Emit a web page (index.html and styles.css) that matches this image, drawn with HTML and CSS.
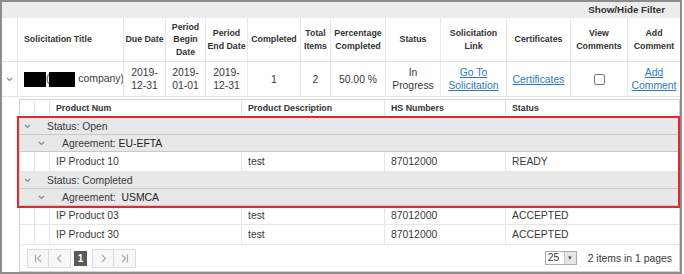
FILE: index.html
```html
<!DOCTYPE html>
<html lang="en">
<head>
  <meta charset="UTF-8" />
  <title>Solicitations</title>
  <link rel="stylesheet" href="styles.css">
</head>
<body>
  <div class="grid">
    <div class="toolbar"><span class="filter-toggle">Show/Hide Filter</span></div>

    <table class="main">
      <colgroup>
        <col class="c-expand"><col class="c-title"><col class="c-due"><col class="c-begin">
        <col class="c-end"><col class="c-done"><col class="c-total"><col class="c-pct">
        <col class="c-status"><col class="c-link"><col class="c-cert"><col class="c-view"><col class="c-add">
      </colgroup>
      <thead>
        <tr>
          <th></th>
          <th class="title-col">Solicitation Title</th>
          <th>Due Date</th>
          <th>Period Begin Date</th>
          <th>Period End Date</th>
          <th>Completed</th>
          <th>Total Items</th>
          <th>Percentage Completed</th>
          <th>Status</th>
          <th>Solicitation Link</th>
          <th>Certificates</th>
          <th>View Comments</th>
          <th>Add Comment</th>
        </tr>
      </thead>
      <tbody>
        <tr class="master-row">
          <td>
            <svg class="chevron" width="7" height="5" viewBox="0 0 7 5"><polyline points="1,1 3.5,3.5 6,1" /></svg>
          </td>
          <td class="title-col title-cell"><span class="redact redact-a"></span>(<span class="redact redact-b"></span> company)</td>
          <td>2019-12-31</td>
          <td>2019-01-01</td>
          <td>2019-12-31</td>
          <td>1</td>
          <td>2</td>
          <td>50.00 %</td>
          <td>In Progress</td>
          <td><a href="#">Go To Solicitation</a></td>
          <td><a href="#">Certificates</a></td>
          <td><span class="checkbox"></span></td>
          <td><a href="#">Add Comment</a></td>
        </tr>
        <tr class="detail-row">
          <td colspan="13" class="detail-cell">
            <div class="subgrid">
              <table class="sub">
                <colgroup>
                  <col class="s-indent1"><col class="s-indent2"><col class="s-num">
                  <col class="s-desc"><col class="s-hs"><col class="s-status">
                </colgroup>
                <thead>
                  <tr>
                    <th></th><th></th>
                    <th>Product Num</th>
                    <th>Product Description</th>
                    <th>HS Numbers</th>
                    <th>Status</th>
                  </tr>
                </thead>
                <tbody>
                  <tr class="group-row">
                    <td colspan="6">
                      <span class="toggle toggle-1"><svg class="chevron" width="7" height="5" viewBox="0 0 7 5"><polyline points="1,1 3.5,3.5 6,1" /></svg></span>Status: Open
                    </td>
                  </tr>
                  <tr class="group-row">
                    <td></td>
                    <td colspan="5">
                      <span class="toggle toggle-2"><svg class="chevron" width="7" height="5" viewBox="0 0 7 5"><polyline points="1,1 3.5,3.5 6,1" /></svg></span>Agreement: <span class="group-value">EU-EFTA</span>
                    </td>
                  </tr>
                  <tr class="item-row tall">
                    <td></td><td></td>
                    <td>IP Product 10</td>
                    <td>test</td>
                    <td>87012000</td>
                    <td>READY</td>
                  </tr>
                  <tr class="group-row">
                    <td colspan="6">
                      <span class="toggle toggle-1"><svg class="chevron" width="7" height="5" viewBox="0 0 7 5"><polyline points="1,1 3.5,3.5 6,1" /></svg></span>Status: Completed
                    </td>
                  </tr>
                  <tr class="group-row">
                    <td></td>
                    <td colspan="5">
                      <span class="toggle toggle-2"><svg class="chevron" width="7" height="5" viewBox="0 0 7 5"><polyline points="1,1 3.5,3.5 6,1" /></svg></span>Agreement:&nbsp; <span class="group-value">USMCA</span>
                    </td>
                  </tr>
                  <tr class="item-row">
                    <td></td><td></td>
                    <td>IP Product 03</td>
                    <td>test</td>
                    <td>87012000</td>
                    <td>ACCEPTED</td>
                  </tr>
                  <tr class="item-row tall">
                    <td></td><td></td>
                    <td>IP Product 30</td>
                    <td>test</td>
                    <td>87012000</td>
                    <td>ACCEPTED</td>
                  </tr>
                </tbody>
              </table>

              <div class="pager">
                <div class="pager-nav">
                  <span class="pg-btn">
                    <svg width="9" height="9" viewBox="0 0 9 9"><path d="M1.5 0.5 V8.5 M7 1 L3.5 4.5 L7 8" /></svg>
                  </span>
                  <span class="pg-btn">
                    <svg width="9" height="9" viewBox="0 0 9 9"><path d="M6 1 L2.5 4.5 L6 8" /></svg>
                  </span>
                  <span class="pg-current">1</span>
                  <span class="pg-btn">
                    <svg width="9" height="9" viewBox="0 0 9 9"><path d="M3 1 L6.5 4.5 L3 8" /></svg>
                  </span>
                  <span class="pg-btn">
                    <svg width="9" height="9" viewBox="0 0 9 9"><path d="M2 1 L5.5 4.5 L2 8 M7.5 0.5 V8.5" /></svg>
                  </span>
                </div>
                <div class="pager-info">
                  <span class="page-size"><span class="size-value">25</span><span class="size-arrow">&#9662;</span></span>
                  <span>2 items in 1 pages</span>
                </div>
              </div>
            </div>
          </td>
        </tr>
      </tbody>
    </table>

    <!-- highlighted rows -->
    <div class="highlight"></div>
  </div>
</body>
</html>
```

FILE: styles.css
```css
* {
  margin: 0;
  padding: 0;
  box-sizing: border-box;
}

body {
  font-family: "Liberation Sans", Arial, sans-serif;
  color: #333;
  background: #fff;
}

.grid {
  position: relative;
  width: 682px;
  height: 274px;
  border: 2px solid #8c8c8c;
  overflow: hidden;
}

.toolbar {
  height: 16px;
  background: #ececec;
  text-align: right;
  padding-right: 15px;
  font-size: 9.8px;
  font-weight: bold;
  line-height: 16px;
  color: #333;
}

/* master table */
.main {
  width: 678px;
  table-layout: fixed;
  border-spacing: 0;
}

.c-expand { width: 15px; }
.c-title { width: 106px; }
.c-due { width: 42px; }
.c-begin { width: 40px; }
.c-end { width: 42px; }
.c-done { width: 53px; }
.c-total { width: 30px; }
.c-pct { width: 55px; }
.c-status { width: 55px; }
.c-link { width: 66px; }
.c-cert { width: 64px; }
.c-view { width: 57px; }
.c-add { width: 53px; }

.main th {
  height: 44px;
  padding: 0 1px;
  font-size: 8.8px;
  font-weight: bold;
  line-height: 12.3px;
  text-align: center;
  vertical-align: middle;
  color: #333;
  border-left: 1px solid #e8e8e8;
  border-bottom: 1px solid #e3e3e3;
}

.main th:first-child,
.master-row td:first-child {
  border-left: 0;
}

.main .title-col {
  text-align: left;
  padding-left: 6px;
}

.master-row td {
  height: 35px;
  padding: 0 2px;
  font-size: 10.4px;
  line-height: 13px;
  text-align: center;
  vertical-align: middle;
  color: #3a3a3a;
  border-left: 1px solid #e8e8e8;
  border-bottom: 1px solid #e3e3e3;
}

.master-row .title-cell {
  padding-right: 0;
  white-space: nowrap;
  overflow: hidden;
}

.master-row a {
  color: #2b7bc0;
  text-decoration: underline;
}

.chevron {
  display: block;
  margin: 0 auto;
}

.chevron polyline {
  fill: none;
  stroke: #8a8a8a;
  stroke-width: 1.2;
}

.redact {
  display: inline-block;
  height: 15px;
  background: #000;
  vertical-align: middle;
}

.redact-a { width: 22px; }
.redact-b { width: 26px; }

.checkbox {
  display: inline-block;
  width: 11px;
  height: 11px;
  border: 1px solid #767676;
  border-radius: 2px;
  vertical-align: middle;
}

/* detail grid */
.detail-cell {
  padding: 2px 0 0 17px;
}

.subgrid {
  border: 1px solid #d4d4d4;
}

.sub {
  width: 100%;
  table-layout: fixed;
  border-spacing: 0;
}

.s-indent1 { width: 14px; }
.s-indent2 { width: 15px; }
.s-num { width: 192px; }
.s-desc { width: 143px; }
.s-hs { width: 121px; }

.sub th {
  height: 18px;
  padding-left: 6px;
  font-size: 8.8px;
  font-weight: bold;
  text-align: left;
  vertical-align: middle;
  border-left: 1px solid #e3e3e3;
  border-bottom: 1px solid #d8d8d8;
}

.sub th:first-child,
.item-row td:first-child {
  border-left: 0;
}

.group-row td {
  height: 17px;
  background: #e8e8e8;
  border-bottom: 1px solid #c9c9c9;
  font-size: 10.4px;
  color: #3a3a3a;
  vertical-align: middle;
  white-space: nowrap;
}

.toggle {
  display: inline-block;
  margin-right: 13px;
  vertical-align: middle;
}

.toggle-1 { width: 14px; }
.toggle-2 { width: 15px; }

.group-value {
  color: #222;
}

.item-row td {
  height: 19px;
  padding-left: 6px;
  font-size: 10.4px;
  color: #3a3a3a;
  vertical-align: middle;
  border-left: 1px solid #e6e6e6;
  border-bottom: 1px solid #e6e6e6;
}

.item-row.tall td {
  height: 20px;
}

/* pager */
.pager {
  height: 26px;
  padding: 0 7px;
  display: flex;
  justify-content: space-between;
  align-items: center;
  font-size: 10.4px;
  color: #3a3a3a;
}

.pager-nav {
  display: flex;
  align-items: center;
}

.pg-btn {
  width: 22px;
  height: 19px;
  display: flex;
  align-items: center;
  justify-content: center;
  background: #f7f7f7;
  border: 1px solid #dcdcdc;
}

.pg-btn + .pg-btn {
  border-left: 0;
}

.pg-btn path {
  fill: none;
  stroke: #a8a8a8;
  stroke-width: 1.2;
}

.pg-current {
  width: 13px;
  height: 15px;
  margin: 0 5px 0 3px;
  background: #5a5a5a;
  color: #fff;
  font-weight: bold;
  font-size: 10px;
  line-height: 15px;
  text-align: center;
}

.pager-info {
  display: flex;
  align-items: center;
  gap: 11px;
}

.page-size {
  display: flex;
  width: 32px;
  height: 14px;
  border: 1px solid #aaa;
  font-size: 10.4px;
}

.size-value {
  flex: 1;
  padding-left: 2px;
  line-height: 12px;
  background: #fff;
}

.size-arrow {
  width: 12px;
  background: #e6e6e6;
  border-left: 1px solid #c4c4c4;
  font-size: 7px;
  line-height: 12px;
  text-align: center;
  color: #555;
}

.highlight {
  position: absolute;
  left: 15px;
  top: 114px;
  width: 663px;
  height: 92px;
  border: 2px solid #e52630;
}
```
